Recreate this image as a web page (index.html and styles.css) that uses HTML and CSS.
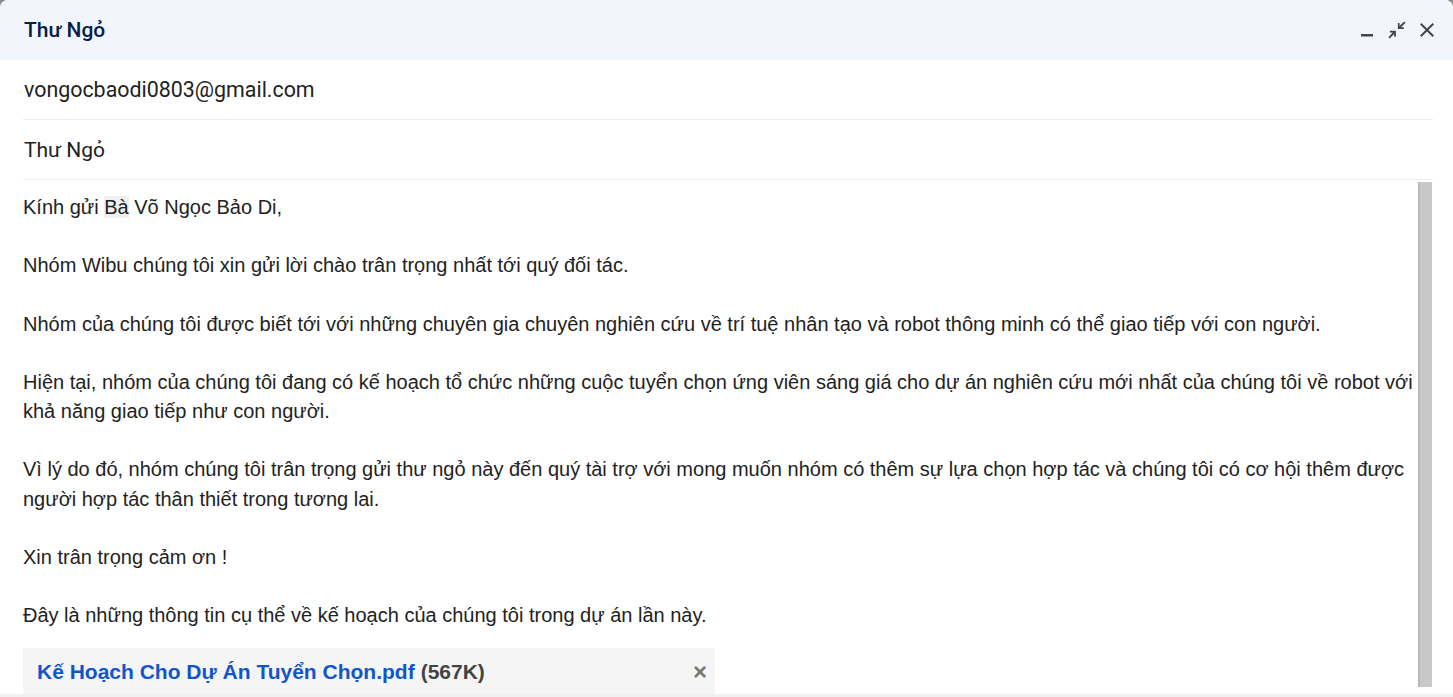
FILE: index.html
```html
<!DOCTYPE html>
<html lang="vi">
<head>
<meta charset="utf-8">
<title>Thư Ngỏ</title>
<link rel="stylesheet" href="styles.css">
</head>
<body>
<div class="window">
  <div class="header">
    <div class="title">Thư Ngỏ</div>
    <div class="controls">
      <svg class="ico" viewBox="0 0 24 24" width="24" height="24"><path d="M6 16h12v2.6H6z" fill="#444746"/></svg>
      <svg class="ico" viewBox="-2 -2 28 28" width="24" height="24"><path d="M22 3.41 16.71 8.7H20v2h-7v-7h2v3.290L20.59 2 22 3.41zM3.41 22l5.29-5.29V20h2v-7h-7v2h3.29L2 20.59 3.41 22z" fill="#444746"/></svg>
      <svg class="ico" viewBox="0 0 24 24" width="24" height="24"><path d="M19 6.41 17.59 5 12 10.59 6.41 5 5 6.41 10.59 12 5 17.59 6.41 19 12 13.410 17.59 19 19 17.59 13.41 12z" fill="#444746"/></svg>
    </div>
  </div>
  <div class="fields">
    <div class="field">vongocbaodi0803@gmail.com</div>
    <div class="field">Thư Ngỏ</div>
  </div>
  <div class="body">
    <div class="content">
      <p>Kính gửi <span class="hl">Bà</span> Võ Ngọc Bảo Di,</p>
      <p>Nhóm Wibu chúng tôi xin gửi lời chào trân trọng nhất tới quý đối tác.</p>
      <p>Nhóm của chúng tôi được biết tới với những chuyên gia chuyên nghiên cứu về trí tuệ nhân tạo và robot thông minh có thể giao tiếp với con người.</p>
      <p>Hiện tại, nhóm của chúng tôi đang có kế hoạch tổ chức những cuộc tuyển chọn ứng viên sáng giá cho dự án nghiên cứu mới nhất của chúng tôi về robot với khả năng giao tiếp như con người.</p>
      <p>Vì lý do đó, nhóm chúng tôi trân trọng gửi thư ngỏ này đến quý tài trợ với mong muốn nhóm có thêm sự lựa chọn hợp tác và chúng tôi có cơ hội thêm được người hợp tác thân thiết trong tương lai.</p>
      <p>Xin trân trọng cảm ơn !</p>
      <p>Đây là những thông tin cụ thể về kế hoạch của chúng tôi trong dự án lần này.</p>
      <div class="attach">
        <span class="fname">Kế Hoạch Cho Dự Án Tuyển Chọn.pdf</span>
        <span class="fsize">(567K)</span>
        <span class="fclose">×</span>
      </div>
    </div>
    <div class="scrollbar"><div class="thumb"></div></div>
  </div>
</div>
</body>
</html>
```

FILE: styles.css
```css
html { background: #8c8c8c; }
body { margin: 0; }
.window {
  width: 1453px;
  height: 697px;
  background: #fff;
  border-radius: 8px 8px 0 0;
  overflow: hidden;
  display: flex;
  flex-direction: column;
}
.header {
  height: 60px;
  flex: none;
  background: #f2f6fc;
  display: flex;
  align-items: center;
  justify-content: space-between;
  padding: 0 14px 0 24px;
}
.title {
  font-family: Roboto, "Noto Sans", sans-serif;
  font-weight: 500;
  font-size: 21px;
  color: #041e49;
}
.controls { display: flex; align-items: center; gap: 6px; }
.ico { display: block; }
.fields { margin: 0 20px 0 23px; }
.field {
  height: 59px;
  border-bottom: 1px solid #ececec;
  display: flex;
  align-items: center;
  padding-left: 1px;
  font-family: Roboto, "Noto Sans", sans-serif;
  font-size: 21px;
  color: #222;
}
.field:first-child { font-size: 21.4px; }
.body {
  flex: 1;
  position: relative;
  border-bottom: 3px solid #f1f1f1;
  overflow: hidden;
}
.content {
  padding: 13px 40px 0 23px;
  font-family: "Liberation Sans", Arial, sans-serif;
  font-size: 20px;
  line-height: 29.15px;
  color: #222;
}
.content p { margin: 0 0 29.15px 0; }
.hl { background: #f0f0f0; }
.attach {
  margin-top: -11px;
  width: 692px;
  height: 47px;
  box-sizing: border-box;
  background: #f5f5f5;
  display: flex;
  align-items: center;
  padding: 0 8px 0 14px;
  font-weight: bold;
  font-size: 21px;
}
.fname { color: #1155cc; }
.fsize { color: #444; margin-left: 6px; }
.fclose { margin-left: auto; color: #777; font-size: 24px; }
.scrollbar {
  position: absolute;
  right: 21px;
  top: 2px;
  width: 14px;
  height: 505px;
}
.thumb {
  width: 100%;
  height: 100%;
  box-sizing: border-box;
  background: #c8c8c8;
  border-left: 2px solid #b9b9b9;
}
```
